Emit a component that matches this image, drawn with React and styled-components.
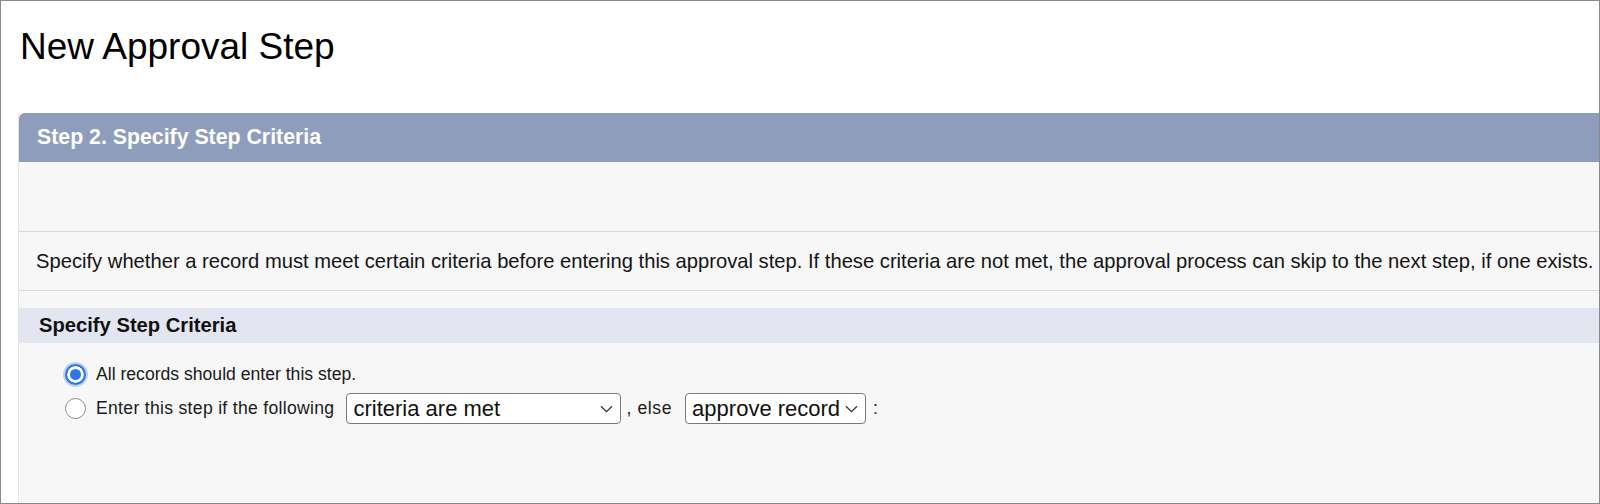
import React from "react";
import styled, { createGlobalStyle } from "styled-components";

const Global = createGlobalStyle`
  html, body { margin: 0; padding: 0; background: #fff; }
  body { font-family: "Liberation Sans", Arial, sans-serif; color: #181818; }
  * { box-sizing: border-box; }
`;

const Frame = styled.div`
  width: 1600px;
  height: 504px;
  border: 1px solid #8a8a8a;
  overflow: hidden;
  display: flex;
  flex-direction: column;
  background: #fff;
`;

const Title = styled.h1`
  margin: 26px 0 0 19px;
  font-size: 37px;
  line-height: 40px;
  font-weight: 400;
  color: #000;
`;

const Panel = styled.section`
  margin: 46px 0 0 17px;
  flex: 1;
  display: flex;
  flex-direction: column;
  background: #f7f7f7;
  border-left: 1px solid #e4e4e4;
`;

const PanelHeader = styled.div`
  height: 49px;
  flex: none;
  display: flex;
  align-items: center;
  padding-left: 18px;
  background: #8f9dbd;
  border-top-left-radius: 6px;
  color: #fff;
  font-size: 21.3px;
  font-weight: 700;
`;

const Spacer = styled.div`
  height: ${(p) => p.$h}px;
  flex: none;
  border-bottom: ${(p) => (p.$line ? "1px solid #d9d9d9" : "none")};
`;

const Description = styled.p`
  margin: 0;
  height: 59px;
  flex: none;
  display: flex;
  align-items: center;
  padding-left: 17px;
  border-bottom: 1px solid #d9d9d9;
  font-size: 20.2px;
  white-space: nowrap;
  color: #141414;
`;

const SubHeader = styled.div`
  margin-top: 17px;
  height: 35px;
  flex: none;
  display: flex;
  align-items: center;
  padding-left: 20px;
  background: #e3e6f0;
  font-size: 20.2px;
  font-weight: 700;
  color: #111;
`;

const Options = styled.div`
  padding: 16px 0 0 46px;
  display: flex;
  flex-direction: column;
  gap: 3px;
`;

const OptionRow = styled.label`
  display: flex;
  align-items: center;
  height: 31px;
  font-size: 17.6px;
  color: #1a1a1a;
`;

const Radio = styled.input.attrs({ type: "radio" })`
  appearance: none;
  width: 21px;
  height: 21px;
  margin: 0 10px 0 0;
  border-radius: 50%;
  border: 1px solid #8c8c8c;
  background: #fff;
  flex: none;
  &:checked {
    border: 2px solid #2b78e6;
    background: #2b78e6;
    box-shadow: inset 0 0 0 3px #fff, 0 0 0 2px rgba(43, 120, 230, 0.28);
  }
`;

const SelectWrap = styled.span`
  position: relative;
  display: inline-flex;
  width: ${(p) => p.$w}px;
  height: 31px;
  margin: ${(p) => p.$m};
`;

const Select = styled.select`
  appearance: none;
  width: 100%;
  height: 100%;
  padding: 0 24px 0 6px;
  font-family: "Liberation Sans", Arial, sans-serif;
  font-size: 22px;
  color: #111;
  background: #fff;
  border: 1px solid #7a7a7a;
  border-radius: 4px;
`;

const Chevron = styled.svg`
  position: absolute;
  right: 8px;
  top: 50%;
  margin-top: -4px;
  pointer-events: none;
`;

const Plain = styled.span`
  white-space: pre;
  margin-left: ${(p) => p.$ml || 0}px;
  letter-spacing: ${(p) => p.$ls || 0}px;
`;

function Dropdown({ width, margin, value }) {
  return (
    <SelectWrap $w={width} $m={margin}>
      <Select defaultValue={value}>
        <option>{value}</option>
      </Select>
      <Chevron width="13" height="8" viewBox="0 0 13 8">
        <path d="M1 1.2 L6.5 6.6 L12 1.2" fill="none" stroke="#333" strokeWidth="1.3" />
      </Chevron>
    </SelectWrap>
  );
}

export default function App() {
  return (
    <>
      <Global />
      <Frame>
        <Title>New Approval Step</Title>
        <Panel>
          <PanelHeader>Step 2. Specify Step Criteria</PanelHeader>
          <Spacer $h={70} $line />
          <Description>
            Specify whether a record must meet certain criteria before entering this approval step. If these criteria are not met, the approval process can skip to the next step, if one exists.
          </Description>
          <SubHeader>Specify Step Criteria</SubHeader>
          <Options>
            <OptionRow>
              <Radio name="crit" defaultChecked />
              All records should enter this step.
            </OptionRow>
            <OptionRow>
              <Radio name="crit" />
              <Plain $ls={0.3}>Enter this step if the following</Plain>
              <Dropdown width={275} margin="0 0 0 12px" value="criteria are met" />
              <Plain $ml={5} $ls={0.6}>, else</Plain>
              <Dropdown width={181} margin="0 0 0 13px" value="approve record" />
              <Plain $ml={7}>:</Plain>
            </OptionRow>
          </Options>
        </Panel>
      </Frame>
    </>
  );
}
